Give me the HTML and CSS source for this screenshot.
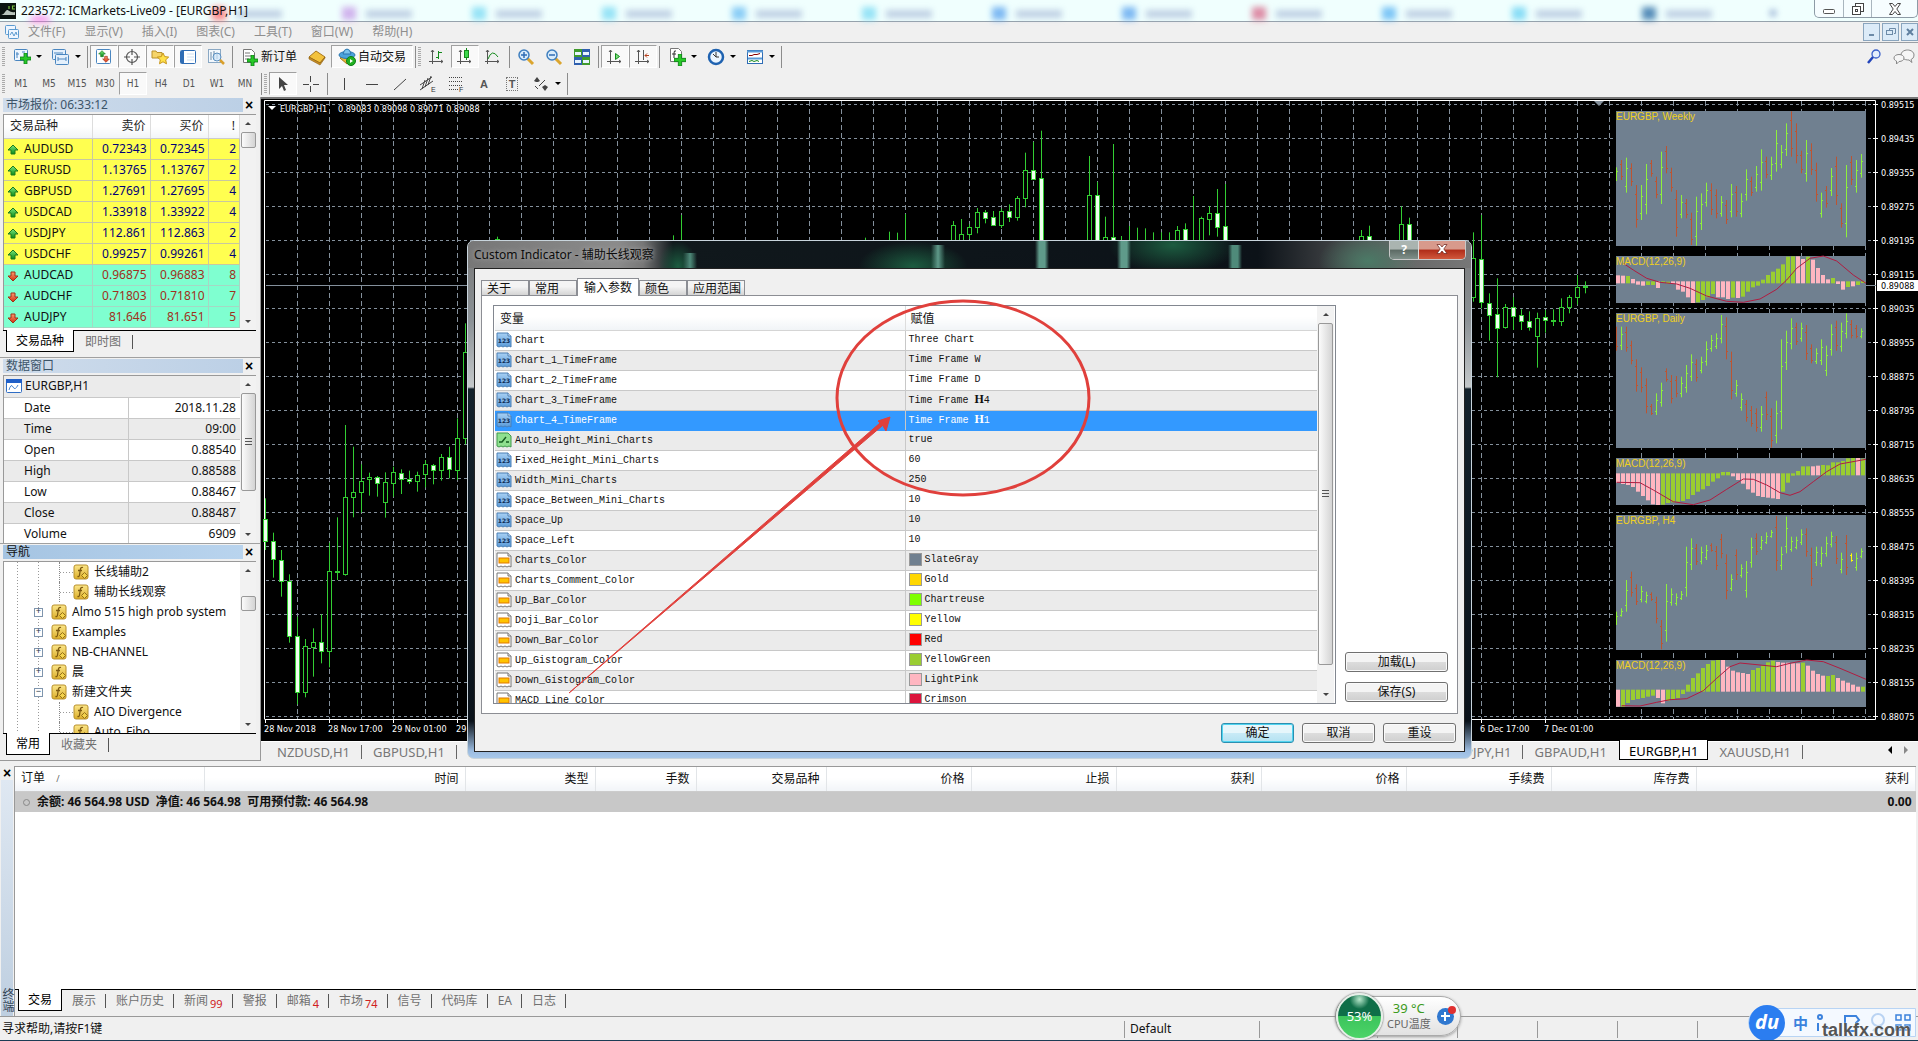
FILE: index.html
```html
<!DOCTYPE html>
<html lang="zh-CN">
<head>
    <meta charset="UTF-8">
    <meta name="viewport" content="width=device-width, initial-scale=1.0">
    <title>223572: ICMarkets-Live09 - [EURGBP,H1]</title>
    <link rel="stylesheet" href="styles.css">
</head>

<body>
    <!-- shared icons -->
    <svg class="defs" width="0" height="0">
        <defs>
            <linearGradient id="gGreen" x1="0" y1="0" x2="0" y2="1"><stop offset="0" stop-color="#7be87b"/><stop offset="1" stop-color="#0a8a1a"/></linearGradient>
            <linearGradient id="gRed" x1="0" y1="0" x2="0" y2="1"><stop offset="0" stop-color="#ff9a70"/><stop offset="1" stop-color="#d03010"/></linearGradient>
            <linearGradient id="gBlue" x1="0" y1="0" x2="0" y2="1"><stop offset="0" stop-color="#a8d0f4"/><stop offset="1" stop-color="#5b9bd8"/></linearGradient>
            <linearGradient id="gGold" x1="0" y1="0" x2="0" y2="1"><stop offset="0" stop-color="#fbe68a"/><stop offset="1" stop-color="#dcae28"/></linearGradient>
        </defs>
        <symbol id="up" viewBox="0 0 12 12"><path d="M6 1l5 5H8v4H4V6H1z" fill="url(#gGreen)" stroke="#1d7a1d"/></symbol>
        <symbol id="down" viewBox="0 0 12 12"><path d="M6 11L1 6h3V2h4v4h3z" fill="url(#gRed)" stroke="#a03018"/></symbol>
        <symbol id="num" viewBox="0 0 16 16"><path d="M1 1h11l3 3v11l-2-1-2 1-2-1-2 1-2-1-2 1-2-1z" fill="url(#gBlue)" stroke="#4b7fb5"/><path d="M12 1v3h3" fill="#e6f2fd" stroke="#4b7fb5"/><text x="8" y="11" text-anchor="middle" class="num-text">123</text></symbol>
        <symbol id="bool" viewBox="0 0 16 16"><path d="M1 1h11l3 3v11l-2-1-2 1-2-1-2 1-2-1-2 1-2-1z" fill="#8fe08f" stroke="#3f9a4b"/><path d="M3 10h3l4-5M10 10h3" fill="none" stroke="#155c20" stroke-width="1.4"/></symbol>
        <symbol id="color" viewBox="0 0 16 16"><path d="M1 1h11l3 3v11l-2-1-2 1-2-1-2 1-2-1-2 1-2-1z" fill="#fff" stroke="#777"/><path d="M12 1v3h3" fill="#eee" stroke="#777"/><rect x="3" y="6" width="10" height="5" fill="#ffc400" stroke="#e07800"/></symbol>
        <symbol id="func" viewBox="0 0 16 16"><rect x="1" y="1" width="14" height="14" rx="2" fill="url(#gGold)" stroke="#b8902c"/><path d="M10 3.500c-2-.8-2.500 1-2.800 3L6.500 11c-.3 1.600-1 1.800-2 1.400M5 6.500h4" fill="none" stroke="#7d5a10" stroke-width="1.300"/><path d="M11.500 8.500l3 3-3 3-3-3z" fill="#f3d24c" stroke="#94701a"/></symbol>
        <symbol id="plus" viewBox="0 0 11 11"><path d="M4 0h3v4h4v3H7v4H4V7H0V4h4z" fill="#27c827" stroke="#0b7f16" stroke-width=".8"/></symbol>
    </svg>

    <header class="titlebar">
        <svg class="glass" width="1800" height="21" aria-hidden="true">
            <g id="blobs"></g>
        </svg>
        <svg class="logo" width="16" height="16" viewBox="0 0 16 16"><rect width="16" height="16" fill="#0a1410"/><path d="M1 12c3 0 4-4 6-5 2 0 3 3 8 2v3z" fill="#b9c6bd"/><path d="M9 3v3M15 3h-2.500v3H15" fill="none" stroke="#7bc143" stroke-width="1.200"/></svg>
        <h1>223572: ICMarkets-Live09 - [EURGBP,H1]</h1>
        <div class="win-buttons">
            <button aria-label="最小化"><svg width="14" height="14"><rect x="1.500" y="7.500" width="11" height="4" rx="1" fill="#fff" stroke="#555"/></svg></button>
            <button aria-label="还原"><svg width="14" height="14" fill="#fff" stroke="#444"><rect x="4.500" y="1.500" width="8" height="8"/><rect x="1.500" y="4.500" width="8" height="8"/><rect x="4.500" y="7.500" width="2" height="2"/></svg></button>
            <button aria-label="关闭"><svg width="14" height="14"><path d="M1.500 1.500h3L7 4.500l2.500-3h3L8.800 7l3.700 5.500h-3L7 9.500l-2.500 3h-3L5.200 7z" fill="#fff" stroke="#444"/></svg></button>
        </div>
    </header>

    <nav class="menubar">
        <svg width="16" height="16" fill="#eef6ff" stroke="#5b9bd0"><rect x="1.500" y="1.500" width="10" height="9" rx="1"/><rect x="4.500" y="5.500" width="10" height="9" rx="1"/><path d="M6 11l2-3 2 4 2-4 1 3" fill="none"/></svg>
        <button>文件(F)</button>
        <button>显示(V)</button>
        <button>插入(I)</button>
        <button>图表(C)</button>
        <button>工具(T)</button>
        <button>窗口(W)</button>
        <button>帮助(H)</button>
        <div class="mdi-buttons">
            <button aria-label="最小化"><svg width="12" height="12"><path d="M3 9h5" stroke="#6d8ba8" stroke-width="2"/></svg></button>
            <button aria-label="还原"><svg width="12" height="12" fill="none" stroke="#6d8ba8"><path d="M4.500 4V2.500h6v5H9"/><rect x="1.500" y="4.500" width="6" height="4"/></svg></button>
            <button aria-label="关闭"><svg width="12" height="12"><path d="M3 3l6 6M9 3l-6 6" stroke="#5f7f9f" stroke-width="2"/></svg></button>
        </div>
    </nav>

    <div class="toolbar">
        <span class="grip"></span>
        <button class="tool split" aria-label="新图表"><svg width="20" height="20"><rect x="2.500" y="2.500" width="13" height="11" rx="1" fill="#eef6ff" stroke="#4a86c0"/><path d="M5 5v6M4 7h3M10 5h3" stroke="#4a86c0"/><use href="#plus" x="8" y="6" width="11" height="11"/></svg></button>
        <button class="tool split" aria-label="模板"><svg width="20" height="20" fill="#e4f0fc" stroke="#4a86c0"><rect x="1.500" y="2.500" width="13" height="10" rx="1"/><rect x="4.500" y="7.500" width="13" height="10" rx="1"/><path d="M3 6h9M7 12h8M7 10v4M15 10v4"/></svg></button>
        <span class="sep"></span>
        <button class="tool pressed" aria-label="市场报价"><svg width="18" height="18"><rect x="1.500" y="1.500" width="14" height="14" rx="1" fill="#fff" stroke="#4a86c0"/><use href="#up" x="3" y="2" width="8" height="8"/><use href="#down" x="7" y="7" width="8" height="8"/></svg></button>
        <button class="tool pressed" aria-label="数据窗口"><svg width="18" height="18" fill="none" stroke="#555" stroke-width="1.200"><circle cx="9" cy="9" r="5.500"/><path d="M9 1v6M9 11v6M1 9h6M11 9h6"/></svg></button>
        <button class="tool pressed" aria-label="导航"><svg width="18" height="18"><path d="M1 3h4l1 1.500h5V10H1z" fill="#f6d56a" stroke="#b8902c"/><path d="M12 5l1.700 3.600 4 .5-3 2.700.8 4-3.500-2-3.500 2 .8-4-3-2.700 4-.5z" fill="#ffe14a" stroke="#c8961c"/></svg></button>
        <button class="tool pressed" aria-label="终端"><svg width="18" height="18"><rect x="1.500" y="2.500" width="15" height="13" rx="1" fill="#fff" stroke="#2f6db5"/><rect x="2" y="3" width="3" height="12" fill="#2f6db5"/><path d="M8 6h7M8 9h7M8 12h7" stroke="#cfe0f2"/></svg></button>
        <button class="tool" aria-label="策略测试"><svg width="18" height="18"><rect x="1.500" y="1.500" width="12" height="13" fill="#f3f8fd" stroke="#8aa8c4"/><path d="M4 4v8M7 3v8M10 5v6" stroke="#6d8ba8"/><circle cx="10" cy="9" r="4" fill="#cfe6fa" fill-opacity=".7" stroke="#5b8fc0"/><path d="M13 12l4 4" stroke="#d9a02c" stroke-width="2.500"/></svg></button>
        <span class="sep"></span>
        <button class="tool label"><svg width="18" height="18"><path d="M2.500 1.500h8l3 3v10h-11z" fill="#fff" stroke="#777"/><path d="M4 5h5M4 8h7M4 11h4" stroke="#777"/><use href="#plus" x="6" y="7" width="11" height="11"/></svg>新订单</button>
        <button class="tool" aria-label="词典"><svg width="18" height="18"><path d="M1 9l7-6 9 6-5 6z" fill="#f3c23c" stroke="#a8761a"/><path d="M1 9v2l11 6 5-7V9l-5 6z" fill="#c98e22" stroke="#8a5e12" stroke-width=".6"/></svg></button>
        <button class="tool label pressed"><svg width="18" height="18"><path d="M2 10l7 6 6-6-6-4z" fill="#e8b93a" stroke="#a8761a"/><ellipse cx="9" cy="7" rx="8" ry="3.500" fill="#4ba3dc" stroke="#2a75ad"/><path d="M5 6q1-5 4-5t4 5z" fill="#7cc4ee" stroke="#2a75ad"/><circle cx="13" cy="13" r="4.500" fill="#22b022" stroke="#0b7f16"/><path d="M12 11l3 2-3 2z" fill="#fff"/></svg>自动交易</button>
        <span class="sep"></span>
        <span class="grip"></span>
        <button class="tool" aria-label="柱状图"><svg width="18" height="18" fill="none" stroke="#555"><path d="M4.500 2v14M1 13.500h14M3 4l1.500-2L6 4M13 12l2 1.500-2 1.500"/><path d="M10.500 3v8M8 9.500h2M11 4.500h3" stroke="#148a1c"/></svg></button>
        <button class="tool pressed" aria-label="蜡烛图"><svg width="18" height="18" fill="none" stroke="#555"><path d="M4.500 2v14M1 13.500h14M3 4l1.500-2L6 4M13 12l2 1.500-2 1.500"/><path d="M10.500 0v12" stroke="#148a1c"/><rect x="8.500" y="2.500" width="4" height="7" fill="#3cd84a" stroke="#148a1c"/></svg></button>
        <button class="tool" aria-label="折线图"><svg width="18" height="18" fill="none" stroke="#555"><path d="M3.500 2v14M1 13.500h14M2 4l1.500-2L5 4M13 12l2 1.500-2 1.500"/><path d="M4 11q4-11 10-2" stroke="#148a1c"/></svg></button>
        <span class="sep"></span>
        <button class="tool" aria-label="放大"><svg width="18" height="18"><path d="M10 10l6 6" stroke="#dba52e" stroke-width="3"/><circle cx="7" cy="7" r="5" fill="#d8ecfb" stroke="#3f7fbf" stroke-width="1.500"/><path d="M4 7h6M7 4v6" stroke="#2f6db5" stroke-width="1.500"/></svg></button>
        <button class="tool" aria-label="缩小"><svg width="18" height="18"><path d="M10 10l6 6" stroke="#dba52e" stroke-width="3"/><circle cx="7" cy="7" r="5" fill="#d8ecfb" stroke="#3f7fbf" stroke-width="1.500"/><path d="M4 7h6" stroke="#2f6db5" stroke-width="1.500"/></svg></button>
        <button class="tool" aria-label="平铺"><svg width="18" height="18"><rect x="1" y="1" width="8" height="8" fill="#3f9a2c"/><rect x="9" y="1" width="8" height="8" fill="#2f5fae"/><rect x="1" y="9" width="8" height="8" fill="#2f5fae"/><rect x="9" y="9" width="8" height="8" fill="#3f9a2c"/><path d="M2 5.500h6M10 5.500h6M2 13.500h6M10 13.500h6" stroke="#e8f4ff" stroke-width="3"/></svg></button>
        <span class="sep"></span>
        <button class="tool pressed" aria-label="自动滚动"><svg width="18" height="18" fill="none" stroke="#555"><path d="M4.500 2v14M1 13.500h14M3 4l1.500-2L6 4M13 12l2 1.500-2 1.500"/><path d="M9.500 5.500v6l4-3z" fill="#7be07b" stroke="#148a1c"/></svg></button>
        <button class="tool pressed" aria-label="图表平移"><svg width="18" height="18" fill="none" stroke="#555"><path d="M4.500 2v14M1 13.500h14M3 4l1.500-2L6 4M13 12l2 1.500-2 1.500M9.500 2v10"/><path d="M15 7.500h-4M13 5.500l-2 2 2 2" stroke="#b8401c"/></svg></button>
        <span class="sep"></span>
        <button class="tool split" aria-label="指标"><svg width="20" height="20"><path d="M3.500 1.500h8l3 3v10h-11z" fill="#fff" stroke="#777"/><path d="M9 4q-2-1-2 2v5M5 7h4" fill="none" stroke="#333"/><use href="#plus" x="7" y="7" width="12" height="12"/></svg></button>
        <button class="tool split" aria-label="时段"><svg width="20" height="20"><circle cx="10" cy="10" r="7" fill="#eaf5ff" stroke="#1f62b0" stroke-width="2.500"/><path d="M10 5v5h3M7 7l3 3" fill="none" stroke="#333"/></svg></button>
        <button class="tool split" aria-label="模板列表"><svg width="20" height="20"><rect x="2.500" y="3.500" width="15" height="13" fill="#fff" stroke="#2f6db5"/><path d="M2 4.500h16M3 11.500h14" stroke="#5b9bd8" stroke-width="2"/><path d="M4 8.500h3l2-1h3l3-1" fill="none" stroke="#800"/><path d="M4 14.500l3-1 2 1 3-1 2 1" fill="none" stroke="#148a1c"/></svg></button>
        <span class="sep"></span>
        <div class="tool-right">
            <button class="tool" aria-label="搜索"><svg width="16" height="16"><circle cx="10" cy="5" r="4" fill="#e4eefc" stroke="#3a5fc8" stroke-width="1.300"/><path d="M7 8l-5 6" stroke="#2244bb" stroke-width="2.500"/></svg></button>
            <button class="tool" aria-label="聊天"><svg width="22" height="18" fill="#f6f6f6" stroke="#888"><path d="M8 7c0-3 3-5 6.500-5S21 4 21 7s-2 4-3 4.500l1 3-3-2.500C11 12 8 10 8 7z"/><path d="M1 10c0-2 2-3.500 5-3.500S11 8 11 10s-2 3.500-5 3.500l-2.500 2.500v-3C2 12.500 1 11.500 1 10z"/></svg></button>
        </div>
    </div>

    <div class="toolbar second">
        <span class="grip"></span>
        <button class="tool tf">M1</button>
        <button class="tool tf">M5</button>
        <button class="tool tf">M15</button>
        <button class="tool tf">M30</button>
        <button class="tool tf pressed">H1</button>
        <button class="tool tf">H4</button>
        <button class="tool tf">D1</button>
        <button class="tool tf">W1</button>
        <button class="tool tf">MN</button>
        <span class="sep"></span>
        <span class="grip"></span>
        <button class="tool pressed" aria-label="光标"><svg width="18" height="18"><path d="M5 2v12l3-3 2 5 2-1-2-5h4z" fill="#444"/></svg></button>
        <button class="tool" aria-label="十字准线"><svg width="18" height="18"><path d="M8.500 1v6M8.500 11v6M1 9.500h6M11 9.500h6" stroke="#444"/></svg></button>
        <span class="sep"></span>
        <button class="tool" aria-label="垂直线"><svg width="18" height="18"><path d="M9.500 3v12" stroke="#444"/></svg></button>
        <button class="tool" aria-label="水平线"><svg width="18" height="18"><path d="M3 9.500h12" stroke="#444"/></svg></button>
        <button class="tool" aria-label="趋势线"><svg width="18" height="18"><path d="M3 15L15 4" stroke="#444"/></svg></button>
        <button class="tool" aria-label="等距通道"><svg width="18" height="18" fill="none" stroke="#444"><path d="M1 10L13 2M1 15L14 6M3 14l3-9M6 12l3-9M9 10l3-9"/><text x="12" y="17" class="mini">E</text></svg></button>
        <button class="tool" aria-label="斐波纳契"><svg width="18" height="18" stroke="#444"><path d="M2 2.500h14M2 6.500h14M2 10.500h14M2 14.500h9" stroke-dasharray="1 1"/><text x="12" y="17" class="mini">F</text></svg></button>
        <button class="tool letter">A</button>
        <button class="tool letter"><span class="boxed">T</span></button>
        <button class="tool split" aria-label="箭头"><svg width="20" height="20" fill="#444"><path d="M3 7l3-4 3 4-2 1H5zM11 13l3-2 3 2-3 4z"/><path d="M4 12l3 3M8 12l6-6" stroke="#444"/></svg></button>
        <span class="sep"></span>
    </div>

    <main class="workspace">
        <aside class="sidebar">
            <section class="panel market">
                <h2>市场报价: 06:33:12<button class="close" aria-label="关闭">×</button></h2>
                <div class="panel-body">
                    <table class="quotes">
                        <thead>
                            <tr><th>交易品种</th><th>卖价</th><th>买价</th><th>!</th></tr>
                        </thead>
                        <tbody>
                            <tr><td><svg><use href="#up"/></svg>AUDUSD</td><td>0.72343</td><td>0.72345</td><td>2</td></tr>
                            <tr><td><svg><use href="#up"/></svg>EURUSD</td><td>1.13765</td><td>1.13767</td><td>2</td></tr>
                            <tr><td><svg><use href="#up"/></svg>GBPUSD</td><td>1.27691</td><td>1.27695</td><td>4</td></tr>
                            <tr><td><svg><use href="#up"/></svg>USDCAD</td><td>1.33918</td><td>1.33922</td><td>4</td></tr>
                            <tr><td><svg><use href="#up"/></svg>USDJPY</td><td>112.861</td><td>112.863</td><td>2</td></tr>
                            <tr><td><svg><use href="#up"/></svg>USDCHF</td><td>0.99257</td><td>0.99261</td><td>4</td></tr>
                            <tr class="fall"><td><svg><use href="#down"/></svg>AUDCAD</td><td>0.96875</td><td>0.96883</td><td>8</td></tr>
                            <tr class="fall"><td><svg><use href="#down"/></svg>AUDCHF</td><td>0.71803</td><td>0.71810</td><td>7</td></tr>
                            <tr class="fall"><td><svg><use href="#down"/></svg>AUDJPY</td><td>81.646</td><td>81.651</td><td>5</td></tr>
                        </tbody>
                    </table>
                    <div class="scroll"><i class="thumb small"></i></div>
                </div>
                <div class="tabs">
                    <button class="active">交易品种</button>
                    <button>即时图</button>
                </div>
            </section>

            <section class="panel data">
                <h2>数据窗口<button class="close" aria-label="关闭">×</button></h2>
                <div class="panel-body">
                    <table class="values">
                        <thead>
                            <tr><th colspan="2"><svg width="16" height="14"><rect x=".5" y=".5" width="15" height="13" rx="1" fill="#fff" stroke="#2f6dc5"/><rect width="16" height="4" fill="#1f5fc8"/><path d="M3 11q2-7 4-3t5-2" fill="none" stroke="#4a86d0"/></svg>EURGBP,H1</th></tr>
                        </thead>
                        <tbody>
                            <tr><td>Date</td><td>2018.11.28</td></tr>
                            <tr><td>Time</td><td>09:00</td></tr>
                            <tr><td>Open</td><td>0.88540</td></tr>
                            <tr><td>High</td><td>0.88588</td></tr>
                            <tr><td>Low</td><td>0.88467</td></tr>
                            <tr><td>Close</td><td>0.88487</td></tr>
                            <tr><td>Volume</td><td>6909</td></tr>
                        </tbody>
                    </table>
                    <div class="scroll"><i class="thumb large"></i></div>
                </div>
            </section>

            <section class="panel navigator">
                <h2 class="focus">导航<button class="close" aria-label="关闭">×</button></h2>
                <div class="panel-body">
                    <ul class="tree">
                        <li class="leaf"><svg><use href="#func"/></svg>长线辅助2</li>
                        <li class="leaf"><svg><use href="#func"/></svg>辅助长线观察</li>
                        <li><b>+</b><svg><use href="#func"/></svg>Almo 515 high prob system</li>
                        <li><b>+</b><svg><use href="#func"/></svg>Examples</li>
                        <li><b>+</b><svg><use href="#func"/></svg>NB-CHANNEL</li>
                        <li><b>+</b><svg><use href="#func"/></svg>晨</li>
                        <li><b>−</b><svg><use href="#func"/></svg>新建文件夹</li>
                        <li class="leaf"><svg><use href="#func"/></svg>AIO Divergence</li>
                        <li class="leaf"><svg><use href="#func"/></svg>Auto_Fibo</li>
                    </ul>
                    <div class="scroll"><i class="thumb middle"></i></div>
                </div>
                <div class="tabs">
                    <button class="active">常用</button>
                    <button>收藏夹</button>
                </div>
            </section>
        </aside>

        <section class="chart-window">
            <svg id="chart" class="chart" viewBox="261 99 1657 640" preserveAspectRatio="xMinYMin meet"></svg>
            <div class="chart-tabs">
                <button>NZDUSD,H1</button>
                <button>GBPUSD,H1</button>
                <button>EURUSD,H1</button>
                <span class="fill"></span>
                <button>GBPJPY,H1</button>
                <button class="plain">GBPAUD,H1</button>
                <button class="active">EURGBP,H1</button>
                <button>XAUUSD,H1</button>
                <span class="arrows"><i class="left"></i><i class="right"></i></span>
            </div>
        </section>
    </main>

    <section class="terminal">
        <div class="terminal-side">
            <button class="close" aria-label="关闭">×</button>
            <span>终端</span>
        </div>
        <div class="terminal-main">
            <table class="orders">
                <colgroup><col class="c-order"><col class="c-time"><col class="c-type"><col class="c-lots"><col class="c-type"><col class="c-price"><col class="c-price"><col class="c-price"><col class="c-price"><col class="c-price"><col class="c-price"><col></colgroup>
                <thead>
                    <tr><th>订单 <small>/</small></th><th>时间</th><th>类型</th><th>手数</th><th>交易品种</th><th>价格</th><th>止损</th><th>获利</th><th>价格</th><th>手续费</th><th>库存费</th><th>获利</th></tr>
                </thead>
                <tbody>
                    <tr><td colspan="11"><i class="ring"></i>余额: 46 564.98 USD&nbsp; 净值: 46 564.98&nbsp; 可用预付款: 46 564.98</td><td>0.00</td></tr>
                </tbody>
            </table>
            <div class="tabs">
                <button class="active">交易</button>
                <button>展示</button>
                <button>账户历史</button>
                <button>新闻<sub>99</sub></button>
                <button>警报</button>
                <button>邮箱<sub>4</sub></button>
                <button>市场<sub>74</sub></button>
                <button>信号</button>
                <button>代码库</button>
                <button>EA</button>
                <button>日志</button>
            </div>
        </div>
    </section>

    <footer class="statusbar">
        <span class="help">寻求帮助,请按F1键</span>
        <span class="s-wide">Default</span>
        <span class="s-mid"></span>
        <span></span>
        <span></span>
        <span></span>
        <span></span>
        <span class="s-last"></span>
    </footer>

    <!-- indicator settings -->
    <div class="dialog" role="dialog" aria-labelledby="dialogTitle">
        <div class="dialog-title">
            <h2 id="dialogTitle">Custom Indicator - 辅助长线观察</h2>
            <div class="dialog-buttons">
                <button aria-label="帮助">?</button>
                <button class="close-red" aria-label="关闭"><svg width="12" height="10"><path d="M1 .5h3l2 2.500L8 .5h3L7.800 5 11 9.500H8L6 7 4 9.500H1L4.200 5z" fill="#fff" stroke="#6a2018" stroke-width=".7"/></svg></button>
            </div>
        </div>
        <div class="dialog-client">
            <div class="dialog-tabs">
                <button>关于</button>
                <button>常用</button>
                <button class="active">输入参数</button>
                <button>颜色</button>
                <button>应用范围</button>
            </div>
            <div class="page">
                <div class="inputs-box">
                    <div class="inputs-view">
                        <table class="inputs">
                            <thead>
                                <tr><th>变量</th><th>赋值</th></tr>
                            </thead>
                            <tbody>
                                <tr><td><svg><use href="#num"/></svg>Chart</td><td>Three Chart</td></tr>
                                <tr><td><svg><use href="#num"/></svg>Chart_1_TimeFrame</td><td>Time Frame W</td></tr>
                                <tr><td><svg><use href="#num"/></svg>Chart_2_TimeFrame</td><td>Time Frame D</td></tr>
                                <tr><td><svg><use href="#num"/></svg>Chart_3_TimeFrame</td><td>Time Frame <b>H</b>4</td></tr>
                                <tr class="selected"><td><svg><use href="#num"/></svg>Chart_4_TimeFrame</td><td>Time Frame <b>H</b>1</td></tr>
                                <tr><td><svg><use href="#bool"/></svg>Auto_Height_Mini_Charts</td><td>true</td></tr>
                                <tr><td><svg><use href="#num"/></svg>Fixed_Height_Mini_Charts</td><td>60</td></tr>
                                <tr><td><svg><use href="#num"/></svg>Width_Mini_Charts</td><td>250</td></tr>
                                <tr><td><svg><use href="#num"/></svg>Space_Between_Mini_Charts</td><td>10</td></tr>
                                <tr><td><svg><use href="#num"/></svg>Space_Up</td><td>10</td></tr>
                                <tr><td><svg><use href="#num"/></svg>Space_Left</td><td>10</td></tr>
                                <tr><td><svg><use href="#color"/></svg>Charts_Color</td><td><i class="sw slate"></i>SlateGray</td></tr>
                                <tr><td><svg><use href="#color"/></svg>Charts_Comment_Color</td><td><i class="sw gold"></i>Gold</td></tr>
                                <tr><td><svg><use href="#color"/></svg>Up_Bar_Color</td><td><i class="sw chartreuse"></i>Chartreuse</td></tr>
                                <tr><td><svg><use href="#color"/></svg>Doji_Bar_Color</td><td><i class="sw yellow"></i>Yellow</td></tr>
                                <tr><td><svg><use href="#color"/></svg>Down_Bar_Color</td><td><i class="sw red"></i>Red</td></tr>
                                <tr><td><svg><use href="#color"/></svg>Up_Gistogram_Color</td><td><i class="sw ygreen"></i>YellowGreen</td></tr>
                                <tr><td><svg><use href="#color"/></svg>Down_Gistogram_Color</td><td><i class="sw pink"></i>LightPink</td></tr>
                                <tr><td><svg><use href="#color"/></svg>MACD_Line_Color</td><td><i class="sw crimson"></i>Crimson</td></tr>
                            </tbody>
                        </table>
                    </div>
                    <div class="scroll"><i class="thumb huge"></i></div>
                </div>
                <div class="page-side">
                    <button>加载(L)</button>
                    <button>保存(S)</button>
                </div>
            </div>
            <div class="dialog-actions">
                <button class="default">确定</button>
                <button>取消</button>
                <button>重设</button>
            </div>
        </div>
    </div>

    <!-- hand drawn marks over the dialog -->
    <svg class="marks" width="540" height="410" viewBox="560 290 540 410" aria-hidden="true">
        <ellipse cx="963" cy="398" rx="126" ry="97" fill="none" stroke="#e0403c" stroke-width="3"/>
        <path d="M569 693L880 423l2 3z" fill="#e0403c" stroke="#e0403c"/>
        <path d="M890 417l-4 14-3-5-5-5z" fill="#e0403c" stroke="#e0403c"/>
    </svg>

    <div class="cpu-widget">
        <span class="ball">53%</span>
        <span class="cpu-text"><em>39 °C</em>CPU温度</span>
        <span class="boost"></span>
    </div>

    <div class="ime">
        <span class="du">du</span>
        <span class="cn">中</span>
        <svg width="96" height="22" fill="none" stroke="#3b82dd" stroke-width="2"><circle cx="8" cy="5" r="2"/><path d="M6 11v8M14 16h3"/><path d="M33 4h11l3 4-3 3v8H33z"/><circle cx="66" cy="8" r="6" stroke="#b9d3f3"/><path d="M61 19q5-7 10 0" stroke="#b9d3f3"/><path d="M84 3h5v5h-5zM93 3h5v5h-5zM84 13h5v5h-5zM93 13h5v5h-5z" stroke-width="1.500"/></svg>
        <span class="watermark">talkfx.com</span>
    </div>

    <script src="chart.js"></script>
</body>

</html>
```
FILE: styles.css
```css
* {
    box-sizing: border-box;
}

body {
    margin: 0;
    height: 100vh;
    display: flex;
    flex-direction: column;
    overflow: hidden;
    position: relative;
    background: #f0f0f0;
    color: #111;
    font-family: "Noto Sans", "Noto Sans CJK SC", sans-serif;
    font-size: 12px;
    line-height: 16px;
    border-bottom: 1px solid #1c3c55;
}

.defs {
    position: absolute;
}

button {
    font: inherit;
    color: inherit;
    background: none;
    border: 0;
    padding: 0;
    margin: 0;
    white-space: nowrap;
}

h1, h2 {
    margin: 0;
    font-size: 12px;
    font-weight: normal;
}

table {
    border-collapse: collapse;
    table-layout: fixed;
}

th, td {
    padding: 0;
    font-weight: normal;
    white-space: nowrap;
}

i, em {
    font-style: normal;
}

/* title bar */
.titlebar {
    display: flex;
    align-items: center;
    position: relative;
    height: 22px;
    flex: none;
    background: #f0fffe;
    border-bottom: 1px solid #96a2ac;
}

.glass {
    position: absolute;
    left: 0;
    top: 0;
    filter: blur(3px);
}

.logo {
    position: relative;
    margin-right: 5px;
}

.titlebar h1 {
    position: relative;
    flex: 1;
}

.win-buttons {
    position: relative;
    display: flex;
    align-self: flex-start;
    height: 18px;
    border: 1px solid #8d9ba6;
    border-top: 0;
    border-radius: 0 0 5px 5px;
    background: #f6fdff;
}

.win-buttons button {
    width: 28px;
    display: flex;
    justify-content: center;
    align-items: center;
}

.win-buttons button + button {
    border-left: 1px solid #a9b5be;
}

.win-buttons button:last-child {
    width: 46px;
}

/* menu */
.menubar {
    display: flex;
    align-items: center;
    gap: 19px;
    height: 21px;
    flex: none;
    padding-left: 4px;
    color: #8e8e8e;
    border-bottom: 1px solid #9a9fa5;
}

.menubar svg {
    margin-right: -11px;
}

.mdi-buttons {
    display: flex;
    gap: 2px;
    margin-left: auto;
}

.mdi-buttons button {
    width: 17px;
    height: 18px;
    background: #dcebf8;
    border: 1px solid #8aa5be;
    display: flex;
    align-items: center;
    justify-content: center;
}

.mdi-buttons svg {
    margin: 0;
}

/* toolbars */
.toolbar {
    display: flex;
    align-items: center;
    height: 27px;
    flex: none;
    padding-left: 2px;
}

.toolbar .grip {
    width: 3px;
    height: 20px;
    margin-right: 2px;
    background: repeating-linear-gradient(#aaa 0 1px, #f0f0f0 1px 2px);
}

.toolbar .sep {
    width: 1px;
    height: 22px;
    margin: 0 2px;
    background: #8c8c8c;
}

.tool {
    width: 28px;
    height: 23px;
    display: flex;
    align-items: center;
    justify-content: center;
}

.tool.pressed {
    background: #f9f9f9;
    border: 1px solid #fff;
    border-left-color: #a0a0a0;
    border-top-color: #a0a0a0;
}

.tool.label {
    width: auto;
    padding: 0 6px;
    gap: 2px;
}

.tool.split {
    width: 39px;
    gap: 4px;
}

.tool.split::after {
    content: "";
    border: 3px solid transparent;
    border-top-color: #000;
    border-bottom: 0;
}

.tool-right {
    margin-left: auto;
    display: flex;
    gap: 2px;
}

.second .tool {
    color: #555;
}

.tool.tf {
    font-family: "DejaVu Sans Condensed", "DejaVu Sans", sans-serif;
    font-size: 10px;
}

.mini {
    font: 7px "Liberation Sans", sans-serif;
    fill: #333;
    stroke: none;
}

.tool.letter {
    font: bold 11px "Liberation Sans", sans-serif;
}

.boxed {
    border: 1px dotted #777;
    padding: 0 2px;
}

/* workspace */
.workspace {
    display: flex;
    flex: 1;
    min-height: 0;
}

.sidebar {
    width: 261px;
    flex: none;
    display: flex;
    flex-direction: column;
    border-right: 1px solid #999;
    border-bottom: 1px solid #999;
}

.panel {
    display: flex;
    flex-direction: column;
    padding: 1px 4px 0 3px;
    border-bottom: 1px solid #a0a0a0;
}

.panel:last-child {
    border-bottom: 0;
}

.market {
    height: 261px;
}

.data {
    height: 186px;
}

.navigator {
    flex: 1;
    min-height: 0;
}

.panel h2 {
    display: flex;
    align-items: center;
    justify-content: space-between;
    height: 14px;
    flex: none;
    padding-left: 3px;
    color: #3c5468;
    background: linear-gradient(90deg, #cfdceb, #bcd0e6) no-repeat 0 0 / 240px 100%;
}

.panel h2.focus {
    color: #111;
    background-image: linear-gradient(90deg, #a5c4e2, #b9d4ee);
}

.close {
    width: 14px;
    font: bold 14px/14px "Liberation Sans", sans-serif;
    color: #000;
}

.panel-body {
    display: flex;
    flex: 1;
    min-height: 0;
    overflow: hidden;
    margin-top: 2px;
    background: #fff;
    border-left: 1px solid #999;
    border-top: 1px solid #999;
}

.scroll {
    width: 16px;
    flex: none;
    display: flex;
    flex-direction: column;
    align-items: center;
    background: #f2f2f2;
}

.scroll::before,
.scroll::after {
    content: "";
    border: 3px solid transparent;
    margin: 7px 0;
}

.scroll::before {
    border-bottom-color: #444;
    border-top: 0;
}

.scroll::after {
    border-top-color: #444;
    border-bottom: 0;
    margin-top: auto;
}

.thumb {
    width: 15px;
    border: 1px solid #999;
    border-radius: 2px;
    background: linear-gradient(90deg, #fbfbfb, #d4d4d4);
    display: flex;
    align-items: center;
    justify-content: center;
}

.small {
    height: 16px;
}

.middle {
    height: 15px;
    margin-top: 17px;
}

.large {
    height: 98px;
}

.huge {
    height: 342px;
}

.large::after,
.huge::after {
    content: "";
    width: 7px;
    height: 8px;
    background: repeating-linear-gradient(#555 0 1px, transparent 1px 3px);
}

.quotes {
    flex: 1;
    height: 212px;
    color: #000078;
}

.quotes th {
    height: 23px;
    color: #222;
    text-align: right;
    padding-right: 4px;
    border-right: 1px solid #ddd;
    border-bottom: 1px solid #ccc;
    background: linear-gradient(#fff 50%, #f1f4f7);
}

.quotes th:first-child {
    width: 88px;
    text-align: left;
    padding-left: 6px;
}

.quotes th:nth-child(2),
.quotes th:nth-child(3) {
    width: 58px;
}

.quotes td {
    height: 21px;
    text-align: right;
    padding-right: 3px;
    background: #ffff50;
    border: 1px solid #c8c8a0;
    border-width: 0 1px 1px 0;
}

.quotes td:first-child {
    text-align: left;
    color: #111;
}

.quotes svg {
    width: 12px;
    height: 12px;
    margin: 0 5px -3px 3px;
}

.quotes .fall td {
    background: #7fffd0;
    border-color: #a5d8c4;
    color: #a03020;
}

.quotes .fall td:first-child {
    color: #111;
}

.tabs {
    display: flex;
    height: 27px;
    flex: none;
    padding-left: 3px;
    border-top: 1px solid #000;
    color: #707070;
}

.tabs button {
    height: 14px;
    margin-top: 4px;
    padding: 0 11px;
    line-height: 14px;
    border-right: 1px solid #555;
}

.tabs button.active {
    height: 22px;
    margin-top: -1px;
    padding: 0 9px;
    color: #000;
    background: #fff;
    border: 1px solid #000;
    border-top: 0;
}

.values {
    flex: 1;
    height: 168px;
}

.values th,
.values td {
    height: 21px;
    border-bottom: 1px solid #c8c8c8;
}

.values th {
    text-align: left;
    background: #ebebeb;
}

.values th svg {
    margin: 0 3px -3px 2px;
}

.values td:first-child {
    width: 124px;
    padding-left: 20px;
    border-right: 1px solid #c8c8c8;
}

.values td:last-child {
    text-align: right;
    padding-right: 4px;
}

.values tbody tr:nth-child(even) {
    background: #ebebeb;
}

.tree {
    flex: 1;
    list-style: none;
    margin: 0;
    padding: 0 0 0 34px;
    background: repeating-linear-gradient(#999 0 1px, #fff 1px 3px) no-repeat 13px 0 / 1px 100%,
        repeating-linear-gradient(#999 0 1px, #fff 1px 3px) no-repeat 34px 0 / 1px 100%;
}

.tree li {
    display: flex;
    align-items: center;
    height: 20px;
    white-space: nowrap;
    margin-left: -4px;
}

.tree li svg {
    width: 16px;
    height: 16px;
    margin-right: 5px;
}

.tree b {
    width: 9px;
    height: 9px;
    border: 1px solid #7f95ad;
    background: #fff;
    font: 9px/7px "Liberation Mono", monospace;
    text-align: center;
    color: #234;
}

.tree b + svg {
    margin-left: 8px;
}

.tree .leaf {
    margin-left: 21px;
}

.tree .leaf::before {
    content: "";
    width: 13px;
    height: 20px;
    border-left: 1px dotted #888;
    background: repeating-linear-gradient(90deg, #999 0 1px, #fff 1px 3px) no-repeat 0 10px / 100% 1px;
}

/* chart */
.chart-window {
    flex: 1;
    min-width: 0;
    display: flex;
    flex-direction: column;
    background: #000;
    border-top: 2px solid #777;
}

.chart {
    flex: 1;
    min-height: 0;
    width: 100%;
}

.chart text {
    font: 9px "DejaVu Sans Condensed", "DejaVu Sans", sans-serif;
    fill: #fff;
}

.chart .caption {
    font: 10px "Liberation Sans", sans-serif;
    fill: #f0d020;
}

.chart .tag {
    fill: #000;
}

.chart-tabs {
    display: flex;
    align-items: flex-start;
    height: 22px;
    flex: none;
    padding-left: 5px;
    font-size: 13px;
    color: #777;
    background: #f0f0f0;
    border-top: 2px solid #000;
    box-shadow: inset 0 1px #fff;
}

.chart-tabs button {
    height: 14px;
    margin-top: 4px;
    padding: 0 11px;
    line-height: 14px;
    border-right: 1px solid #666;
}

.chart-tabs .plain {
    border-right-color: transparent;
}

.chart-tabs .fill {
    flex: 1;
}

.chart-tabs .active {
    height: 20px;
    margin-top: -1px;
    padding: 0 9px;
    line-height: 22px;
    color: #000;
    background: #fff;
    border: 1px solid #000;
    border-top: 0;
}

.arrows {
    display: flex;
    gap: 12px;
    padding: 5px 6px 0 81px;
}

.arrows i {
    border: 4px solid transparent;
}

.arrows .left {
    border-right-color: #000;
}

.arrows .right {
    border-left-color: #888;
}

/* terminal */
.terminal {
    display: flex;
    height: 256px;
    flex: none;
    padding: 5px 2px 0 0;
    border-bottom: 1px solid #999;
}

.terminal-side {
    width: 15px;
    flex: none;
    display: flex;
    flex-direction: column;
    justify-content: space-between;
    padding-bottom: 4px;
    border-right: 1px solid #999;
    background: linear-gradient(#dfe8f2, #bccddf) no-repeat 1px 14px / 12px 100%;
}

.terminal-side span {
    writing-mode: vertical-rl;
    line-height: 14px;
    color: #345;
}

.terminal-main {
    flex: 1;
    display: flex;
    flex-direction: column;
    justify-content: space-between;
    background: #fff;
    border-top: 1px solid #999;
}

.terminal-main .tabs {
    background: #f0f0f0;
}

.terminal-main .tabs button {
    padding: 0 9px 0 10px;
}

.terminal-main .tabs button.active {
    padding: 0 9px;
}

.terminal-main sub {
    margin-left: 2px;
    line-height: 0;
    font-size: 11px;
    color: #d02020;
}

.orders {
    width: 100%;
}

.orders th {
    height: 24px;
    padding-right: 6px;
    text-align: right;
    border-right: 1px solid #e2e5e8;
    border-bottom: 1px solid #ccc;
    background: linear-gradient(#fff 45%, #f1f4f8);
}

.orders th:first-child {
    text-align: left;
    padding-left: 6px;
}

.orders small {
    margin-left: 8px;
    font-size: 9px;
    color: #666;
}

.orders td {
    height: 21px;
    padding-left: 8px;
    font-weight: bold;
    background: #c8c8c8;
}

.orders td:last-child {
    text-align: right;
    padding-right: 4px;
}

.c-order {
    width: 189px;
}

.c-time {
    width: 261px;
}

.c-type {
    width: 130px;
}

.c-lots {
    width: 101px;
}

.c-price {
    width: 145px;
}

.ring {
    display: inline-block;
    width: 7px;
    height: 7px;
    margin-right: 7px;
    border: 1px solid #888;
    border-radius: 50%;
}

/* status */
.statusbar {
    display: flex;
    align-items: center;
    height: 23px;
    flex: none;
    padding: 1px 0 0 2px;
}

.statusbar span {
    width: 80px;
    height: 17px;
    border-left: 1px solid #999;
    padding-left: 5px;
}

.statusbar .help {
    flex: 1;
    border: 0;
    padding: 0;
}

.statusbar .s-wide {
    width: 135px;
}

.statusbar .s-mid {
    width: 118px;
}

.statusbar .s-last {
    width: 221px;
}

/* dialog */
.dialog {
    position: absolute;
    left: 467px;
    top: 240px;
    width: 1005px;
    height: 519px;
    display: flex;
    flex-direction: column;
    padding: 0 6px 6px;
    border: 1px solid #c8d4dc;
    border-radius: 7px;
    background: linear-gradient(#777 0, #8c9296 80px, #c4c8ca 146px, #14222c 148px, #0a121a 480px, #9cbce0 510px, #a8c8ea 100%);
}

.dialog-title {
    display: flex;
    align-items: center;
    height: 27px;
    flex: none;
    margin: 0 -6px;
    border-radius: 6px 6px 0 0;
    background:
        linear-gradient(90deg, transparent, #4f8a7a, transparent) no-repeat 215px 12px / 14px 100%,
        linear-gradient(90deg, transparent, #5f9a8a, transparent) no-repeat 463px 4px / 14px 100%,
        linear-gradient(90deg, transparent, #5f9a8a 30% 70%, transparent) no-repeat 567px 0 / 14px 100%,
        linear-gradient(90deg, transparent, #5f9a8a 30% 70%, transparent) no-repeat 649px 0 / 14px 100%,
        linear-gradient(90deg, transparent, #4f8a7a 30% 70%, transparent) no-repeat 760px 4px / 14px 100%,
        radial-gradient(ellipse at center, #1c5c40, transparent 70%) no-repeat 190px 0 / 40px 50px,
        radial-gradient(ellipse at center, #1c5c40, transparent 70%) no-repeat 390px 0 / 110px 50px,
        radial-gradient(ellipse at center, #1c5c40, transparent 70%) no-repeat 640px -26px / 130px 60px,
        radial-gradient(ellipse at center, #4b7a66, transparent 70%) no-repeat 850px -10px / 100px 60px,
        linear-gradient(90deg, #777 0, #8b8b8b 150px, #777 175px, #10181c 205px, #0c1218 790px, #666 930px, #777);
}

.dialog-title h2 {
    flex: 1;
    padding-left: 6px;
    color: #0c0c0c;
    text-shadow: 0 0 5px #bbb;
}

.dialog-buttons {
    display: flex;
    align-self: flex-start;
    height: 19px;
    margin-right: 5px;
    border: 1px solid #c8c8c8;
    border-top: 0;
    border-radius: 0 0 5px 5px;
    overflow: hidden;
    color: #fff;
    font-weight: bold;
}

.dialog-buttons button {
    width: 28px;
    background: linear-gradient(#aab4b0 45%, #5c6a64 50%, #80908a);
}

.dialog-buttons .close-red {
    width: 47px;
    border-left: 1px solid #ddd;
    background: linear-gradient(#d89a8c 45%, #b02c18 50%, #d0583c);
}

.dialog-client {
    flex: 1;
    min-height: 0;
    display: flex;
    flex-direction: column;
    padding: 9px 6px 8px;
    background: #f0f0f0;
    border: 1px solid #222;
}

.dialog-tabs {
    display: flex;
    align-items: flex-end;
    height: 17px;
    flex: none;
}

.dialog-tabs button {
    width: 48px;
    height: 15px;
    padding-left: 5px;
    line-height: 15px;
    text-align: left;
    border: 1px solid #8c8e94;
    border-bottom: 0;
    background: linear-gradient(#f4f4f4 40%, #d4d4d4);
}

.dialog-tabs .active {
    width: 62px;
    height: 18px;
    margin-bottom: -1px;
    padding-left: 6px;
    background: #fff;
    position: relative;
}

.dialog-tabs button:last-child {
    width: 58px;
}

.page {
    flex: 1;
    min-height: 0;
    display: flex;
    gap: 9px;
    padding: 9px 9px 9px 11px;
    background: #fff;
    border: 1px solid #8c8e94;
}

.inputs-box {
    flex: 1;
    display: flex;
    padding: 0 1px;
    overflow: hidden;
    border: 1px solid #828790;
}

.inputs-view {
    flex: 1;
    overflow: hidden;
}

.inputs {
    width: 100%;
    font: 10px/16px "Liberation Mono", "Noto Sans CJK SC", monospace;
}

.inputs th {
    height: 24px;
    padding-left: 5px;
    text-align: left;
    font: 12px "Noto Sans CJK SC", sans-serif;
    border-bottom: 1px solid #d5d5d5;
    background: linear-gradient(#fff 45%, #f1f4f7);
}

.inputs th:first-child {
    width: 410px;
    border-right: 1px solid #ddd;
}

.inputs td {
    height: 20px;
    padding-left: 3px;
    border-bottom: 1px solid #c8c8c8;
}

.inputs td:first-child {
    padding-left: 1px;
    border-right: 1px solid #c8c8c8;
}

.inputs tr:nth-child(even) td {
    background: #ebebeb;
}

.inputs tr.selected td {
    background: #3399ff;
    color: #fff;
    border-bottom-color: #3399ff;
}

.inputs td svg {
    width: 16px;
    height: 16px;
    margin-right: 3px;
    vertical-align: middle;
}

.inputs b {
    font: bold 12px "Liberation Serif", serif;
}

.num-text {
    font: bold 6px "DejaVu Sans", sans-serif;
    fill: #0d2b55;
}

.sw {
    display: inline-block;
    width: 13px;
    height: 13px;
    margin-right: 3px;
    vertical-align: middle;
    border: 1px solid #999;
}

.slate { background: slategray; }
.gold { background: gold; }
.chartreuse { background: chartreuse; }
.yellow { background: yellow; }
.red { background: red; }
.ygreen { background: yellowgreen; }
.pink { background: lightpink; }
.crimson { background: crimson; }

.inputs-box .scroll {
    width: 17px;
}

.page-side {
    display: flex;
    flex-direction: column;
    justify-content: flex-end;
    gap: 10px;
    padding-bottom: 2px;
}

.page-side button,
.dialog-actions button {
    width: 73px;
    height: 20px;
    line-height: 16px;
    border: 1px solid #707070;
    border-radius: 3px;
    background: linear-gradient(#f4f4f4 48%, #dcdcdc 52%, #cfcfcf);
    box-shadow: inset 0 0 0 1px #fafafa;
}

.page-side button {
    width: 103px;
}

.dialog-actions {
    display: flex;
    justify-content: flex-end;
    gap: 8px;
    flex: none;
    padding: 9px 2px 0 0;
}

.dialog-actions .default {
    border-color: #2c8fb0;
    background: linear-gradient(#e6f6fb 48%, #c8eaf6 52%, #b4e2f2);
    box-shadow: inset 0 0 0 1px #50d4f0;
}

.marks {
    position: absolute;
    left: 560px;
    top: 290px;
}

/* floating widgets */
.cpu-widget {
    position: absolute;
    left: 1335px;
    bottom: 4px;
    height: 40px;
    width: 126px;
    display: flex;
    align-items: center;
    border-radius: 20px;
    border: 1px solid #aaa;
    background: linear-gradient(#fff, #e2e2e2);
    box-shadow: 0 1px 3px #999;
}

.ball {
    width: 47px;
    height: 47px;
    flex: none;
    border: 2px solid #e6efe8;
    border-radius: 50%;
    box-shadow: 0 0 2px #333;
    background: radial-gradient(circle at 50% 10%, #b8e8cc 0, transparent 22%), linear-gradient(#0f6e48 48%, #3cc45c 50%, #4cd468);
    color: #fff;
    font-size: 13px;
    line-height: 42px;
    text-align: center;
}

.cpu-text {
    margin-left: 4px;
    font-size: 11px;
    color: #666;
}

.cpu-text em {
    display: block;
    font-size: 13px;
    text-align: center;
    color: #3c9a20;
}

.boost {
    position: relative;
    width: 17px;
    height: 17px;
    flex: none;
    margin-left: 6px;
    border-radius: 50%;
    background: linear-gradient(#fff, #fff) no-repeat center / 9px 2px, linear-gradient(#fff, #fff) no-repeat center / 2px 9px, #3078d0;
}

.boost::after {
    content: "";
    position: absolute;
    right: -2px;
    top: -2px;
    width: 8px;
    height: 8px;
    border-radius: 50%;
    background: #e03030;
}

.ime {
    position: absolute;
    right: 2px;
    bottom: 3px;
    width: 168px;
    height: 29px;
    display: flex;
    align-items: center;
    background: #f4f9ff;
    border: 1px solid #b8d4f4;
    border-radius: 14px 0 0 14px;
}

.du {
    width: 36px;
    height: 36px;
    flex: none;
    border-radius: 50%;
    background: #2b7df0;
    color: #fff;
    font: italic bold 20px/34px "Open Sans", sans-serif;
    text-align: center;
}

.cn {
    margin: 0 4px 0 8px;
    font-size: 15px;
    font-weight: bold;
    color: #3b82dd;
}

.ime svg {
    overflow: visible;
}

.watermark {
    position: absolute;
    right: 4px;
    bottom: -2px;
    font: bold 18px/16px "Liberation Sans", sans-serif;
    color: #555;
    text-shadow: 0 0 2px #fff;
}
```
FILE: chart.js
```js
var NS = 'http://www.w3.org/2000/svg';
var chart = document.getElementById('chart');

function add(parent, tag, attrs, text) {
    var el = document.createElementNS(NS, tag);
    for (var key in attrs) {
        el.setAttribute(key, attrs[key]);
    }
    if (text) {
        el.textContent = text;
    }
    parent.appendChild(el);
    return el;
}

function line(x1, y1, x2, y2, color, dash) {
    var attrs = { x1: x1, y1: y1, x2: x2, y2: y2, stroke: color };
    if (dash) {
        attrs['stroke-dasharray'] = dash;
    }
    add(chart, 'line', attrs);
}

// grid
for (var k = 0; k < 19; k++) {
    line(266, 104.5 + 34 * k, 1875, 104.5 + 34 * k, '#84909c', '3 3');
    line(1873, 104.5 + 34 * k, 1878, 104.5 + 34 * k, '#fff');
    add(chart, 'text', { x: 1881, y: 108 + 34 * k }, (0.89515 - 0.0008 * k).toFixed(5));
}
for (var gx = 297.5; gx < 1875; gx += 32) {
    line(gx, 101, gx, 719, '#84909c', '5 3');
}
add(chart, 'path', { d: 'M264.5 719V100.5H1875.500V719.500H264.5', fill: 'none', stroke: '#fff' });
line(266, 285.5, 1876, 285.5, '#84909c');

// candles: [high, top, bottom, low, filled], in thirds of a pixel below y
var candles = [
    { x: 265.5, y: 350, rows: [
        [445, 507, 573, 600, 1], [548, 573, 628, 683, 1], [600, 630, 694, 740, 1], [673, 693, 859, 878, 1],
        [800, 858, 1027, 1063, 1], [867, 888, 1027, 1042, 0], [835, 877, 892, 980, 0], [793, 877, 902, 940, 1],
        [578, 663, 902, 952, 0], [502, 663, 667, 690, 0], [225, 442, 671, 677, 0], [290, 427, 442, 502, 0],
        [343, 394, 427, 488, 0], [368, 382, 388, 437, 0], [378, 381, 398, 440, 1], [367, 397, 455, 503, 0],
        [350, 367, 398, 440, 0], [358, 369, 388, 432, 1], [362, 388, 394, 402, 1], [365, 376, 394, 425, 0],
        [330, 342, 371, 412, 0], [342, 345, 359, 403, 1], [312, 321, 359, 392, 0], [290, 321, 358, 385, 1],
        [205, 265, 359, 390, 0], [-80, 5, 265, 283, 0]
    ] },
    { x: 497.5, y: 90, rows: [[440, 447, 460, 470, 0]] },
    { x: 673.5, y: 90, rows: [[436, 450, 460, 470, 0], [375, 450, 460, 470, 0]] },
    { x: 865.5, y: 90, rows: [[443, 450, 460, 470, 0]] },
    { x: 889.5, y: 90, rows: [[425, 450, 460, 470, 0], [428, 450, 460, 470, 0], [372, 450, 460, 470, 0]] },
    { x: 953.5, y: 90, rows: [
        [393, 404, 470, 480, 0], [387, 433, 470, 480, 0], [403, 411, 433, 447, 0], [354, 366, 412, 430, 0],
        [360, 366, 383, 400, 1], [363, 381, 404, 404, 1], [356, 364, 404, 414, 0], [343, 363, 381, 396, 1],
        [318, 324, 380, 392, 0], [188, 240, 325, 352, 0], [156, 240, 266, 270, 1], [122, 264, 470, 480, 1]
    ] },
    { x: 1089.5, y: 90, rows: [
        [198, 316, 470, 480, 0], [276, 316, 470, 480, 1], [380, 441, 470, 480, 0], [162, 441, 470, 480, 1],
        [438, 460, 470, 480, 0], [408, 460, 470, 480, 0], [413, 460, 470, 480, 0], [415, 460, 470, 480, 0],
        [427, 460, 470, 480, 0], [427, 460, 470, 480, 0], [427, 460, 470, 480, 0], [408, 420, 470, 480, 0],
        [400, 417, 470, 480, 1], [318, 460, 470, 480, 0], [380, 384, 470, 480, 0], [348, 370, 386, 436, 0],
        [297, 370, 410, 440, 1], [282, 408, 470, 480, 1]
    ] },
    { x: 1361.5, y: 90, rows: [[420, 438, 470, 480, 0], [407, 438, 470, 480, 1]] },
    { x: 1401.5, y: 90, rows: [[349, 402, 470, 480, 0], [383, 402, 470, 480, 1]] },
    { x: 1473.5, y: 80, rows: [
        [457, 535, 650, 665, 0], [405, 538, 667, 685, 1], [640, 670, 704, 782, 1], [595, 702, 743, 892, 1],
        [672, 682, 740, 746, 0], [652, 682, 707, 750, 1], [688, 706, 724, 750, 1], [694, 723, 740, 752, 1],
        [698, 714, 767, 863, 0], [690, 711, 721, 758, 1], [688, 719, 722, 738, 0], [655, 682, 722, 738, 0],
        [645, 652, 680, 700, 0], [585, 622, 652, 674, 0], [604, 618, 622, 640, 0]
    ] }
];

candles.forEach(function (group) {
    group.rows.forEach(function (c, i) {
        var x = group.x + i * 8;
        var top = Math.round(group.y + c[1] / 3) + 0.5;
        var bottom = Math.round(group.y + c[2] / 3) + 0.5;
        line(x, group.y + c[0] / 3, x, group.y + c[3] / 3, '#32cd32');
        add(chart, 'rect', {
            x: x - 2, y: top, width: 4, height: Math.max(bottom - top, 1),
            fill: c[4] ? '#efffef' : '#000', stroke: '#32cd32'
        });
    });
});

// mini charts: "high-low" plus g / r / y for the colour
var minis = [
    { name: 'EURGBP, Weekly', y: 111, base: 80, zero: 607,
      bars: '262-303g 240-300r 233-338g 250-318r 315-443r 315-420g 252-403g 240-290r 290-355r 215-372g 198-280r 263-335r 330-470r 345-415g 357-415r 398-495r 350-497g 340-450g 308-380g 310-405r 328-415r 348-410g 360-432r 312-412g 318-410r 340-412g 268-362g 290-348r 258-335g 208-332g 230-295r 230-300g 150-275g 195-265g 130-228g 94-230r 130-250r 212-280r 180-305g 190-285r 248-365r 338-413g 318-383r 264-348g 230-375r 370-443r 255-472g 228-315r 240-338g 222-293g',
      macd: '21p 20p 19g 10p -7p -10p -8g -8g -17p -2g 2g -4p -22p -28p -45p -62p -60g -53g -45g -35g -45p -45p -50p -46g -47p -43g -28g -15g -10g 8g 22g 32g 41g 54g 77g 78g 78p 70p 77g 68p 43p 22p 9p 13g -5p -22p -14g -12p -8g -2g',
      signal: '490,550 520,570 560,595 600,607 650,612 690,625 740,648 800,664 850,667 900,657 950,628 980,600 1010,565 1050,535 1090,528 1130,543 1180,585 1218,610' },
    { name: 'EURGBP, Daily', y: 313, base: 80, macdBase: 440, zero: 103,
      bars: '740-812r 740-810g 740-815r 782-853r 838-935r 862-937r 895-1000r 972-1005r 940-1005g 908-980g 865-905r 885-970r 888-952r 890-952g 855-938g 823-903g 838-905r 830-880g 784-857g 765-815g 760-807g 705-790g 712-838r 815-958r 900-950g 940-992g 960-1025r 978-1040r 985-1055r 978-1055g 935-1020r 985-1103r 962-1090g 778-1048g 752-870g 715-808g 728-795r 728-785g 735-840r 793-850r 805-852g 778-855g 797-888g 733-827g 722-812r 728-815g 700-775g 720-775r 735-775r 745-775g',
      macd: '-25p -29p -32p -38p -52p -65p -78p -90p -92p -91g -86g -84g -82g -80g -74g -62g -52g -45g -35g -22g -12g 7g 7g -6p -17p -28p -45p -55p -65p -68p -70p -72p -74p -52g -25g -4g 10g 24g 24g 24p 26p 28g 27g 36g 36g 40g 48g 49g 49p 47g',
      signal: '470,127 540,128 580,150 640,185 700,194 750,180 800,148 850,117 880,118 920,135 960,158 990,166 1020,155 1060,125 1100,95 1140,72 1218,58' },
    { name: 'EURGBP, H4', y: 515, base: 440, zero: 752,
      bars: '515-555g 505-530g 420-515g 395-470r 433-495r 438-487g 455-490g 457-483r 470-550r 540-628r 432-605g 445-497g 460-497g 453-480g 320-470g 295-390g 312-375r 320-373g 315-360g 310-335r 318-390r 282-355r 343-478r 403-453g 328-420r 373-413g 363-473g 293-383g 280-345r 288-330g 277-312g 270-293g 228-392r 320-390g 230-340g 290-335g 290-328g 268-315g 265-350r 323-438r 320-378g 320-380g 290-350g 275-322g 288-372r 338-400g 285-405r 340-365y 338-392g 325-355g',
      macd: '-48p -48g -37g -28g -25g -22g -18g -15g -22p -38p -30g -28g -22g -10g 18g 38g 52g 68g 80g 90g 92g 92p 72p 60p 55p 53p 50p 62g 68g 75g 85g 90g 86p 84p 84p 82p 82p 84g 75p 60p 50p 45p 44g 47g 38p 30p 24p 18p 12p 12g',
      signal: '485,797 540,798 590,787 630,779 680,776 730,752 770,715 810,680 840,669 900,675 950,680 990,670 1040,660 1090,665 1140,685 1218,718' }
];
var barColors = { g: '#8ef03c', r: '#bc5432', y: '#ffff00' };

minis.forEach(function (m) {
    add(chart, 'rect', { x: 1616, y: m.y, width: 250, height: 135, fill: '#708090' });
    add(chart, 'rect', { x: 1616, y: m.y + 145, width: 250, height: 47, fill: '#708090' });

    m.bars.split(' ').forEach(function (bar, i) {
        var p = bar.slice(0, -1).split('-');
        var color = barColors[bar.slice(-1)];
        var x = 1616.5 + i * 5;
        var y1 = m.base + p[0] / 3;
        var y2 = m.base + p[1] / 3;
        line(x, y1, x, y2, color);
        var open = Math.round(y1 + (y2 - y1) * (color === barColors.g ? 0.8 : 0.2)) + 0.5;
        var close = Math.round(y1 + (y2 - y1) * (color === barColors.g ? 0.3 : 0.8)) + 0.5;
        if (i > 0) {
            line(x - 1.5, open, x, open, color);
        }
        line(x, close, x + 1.5, close, color);
    });

    var base = m.macdBase || m.base;
    var zero = base + m.zero / 3;
    m.macd.split(' ').forEach(function (v, i) {
        var h = parseInt(v, 10) / 3;
        add(chart, 'rect', {
            x: 1616 + i * 5, y: h > 0 ? zero - h : zero - 1, width: 4, height: Math.abs(h) + 1,
            fill: v.slice(-1) === 'g' ? 'yellowgreen' : 'lightpink'
        });
    });
    var points = m.signal.split(' ').map(function (p) {
        var xy = p.split(',');
        return (1460 + xy[0] / 3).toFixed(1) + ',' + (base + xy[1] / 3).toFixed(1);
    });
    add(chart, 'polyline', { points: points.join(' '), fill: 'none', stroke: '#b01c40' });

    add(chart, 'text', { x: 1616, y: m.y + 9, 'class': 'caption' }, m.name);
    add(chart, 'text', { x: 1616, y: m.y + 154, 'class': 'caption' }, 'MACD(12,26,9)');
});

// labels
add(chart, 'path', { d: 'M268 106h8l-4 4z', fill: '#fff' });
add(chart, 'text', { x: 280, y: 112 }, 'EURGBP,H1');
add(chart, 'text', { x: 338, y: 112 }, '0.89083 0.89098 0.89071 0.89088');
add(chart, 'path', { d: 'M1594 101h10l-5 5z', fill: '#84909c' });
add(chart, 'rect', { x: 1877, y: 280, width: 41, height: 11, fill: '#fff' });
add(chart, 'text', { x: 1881, y: 289, 'class': 'tag' }, '0.89088');
[[264, '28 Nov 2018'], [328, '28 Nov 17:00'], [392, '29 Nov 01:00'], [456, '29 Nov 09:00'],
 [1480, '6 Dec 17:00'], [1544, '7 Dec 01:00']].forEach(function (t) {
    line(t[0] + 1.5, 719, t[0] + 1.5, 723, '#fff');
    add(chart, 'text', { x: t[0], y: 732 }, t[1]);
});

// blurred browser tabs behind the title bar
var blobs = document.getElementById('blobs');
['#ff6a6a', '#c8a0e8', '#7fdcf4', '#7fdcf4', '#70c0f4', '#7fdcf4', '#60a8f0', '#60a8f0', '#d87090', '#60b8f4', '#6fd4f4', '#3070a8'].forEach(function (c, i) {
    var x = 212 + i * 130;
    add(blobs, 'rect', { x: x, y: 7, width: 14, height: 13, fill: c, opacity: 0.8 });
    add(blobs, 'rect', { x: x + 24, y: 10, width: 46, height: 8, fill: '#9fb0d4', opacity: 0.6 });
});
add(blobs, 'ellipse', { cx: 40, cy: 22, rx: 12, ry: 5, fill: '#ff50e0' });
add(blobs, 'rect', { x: 1770, y: 10, width: 6, height: 6, fill: '#8fa8d0' });
```
